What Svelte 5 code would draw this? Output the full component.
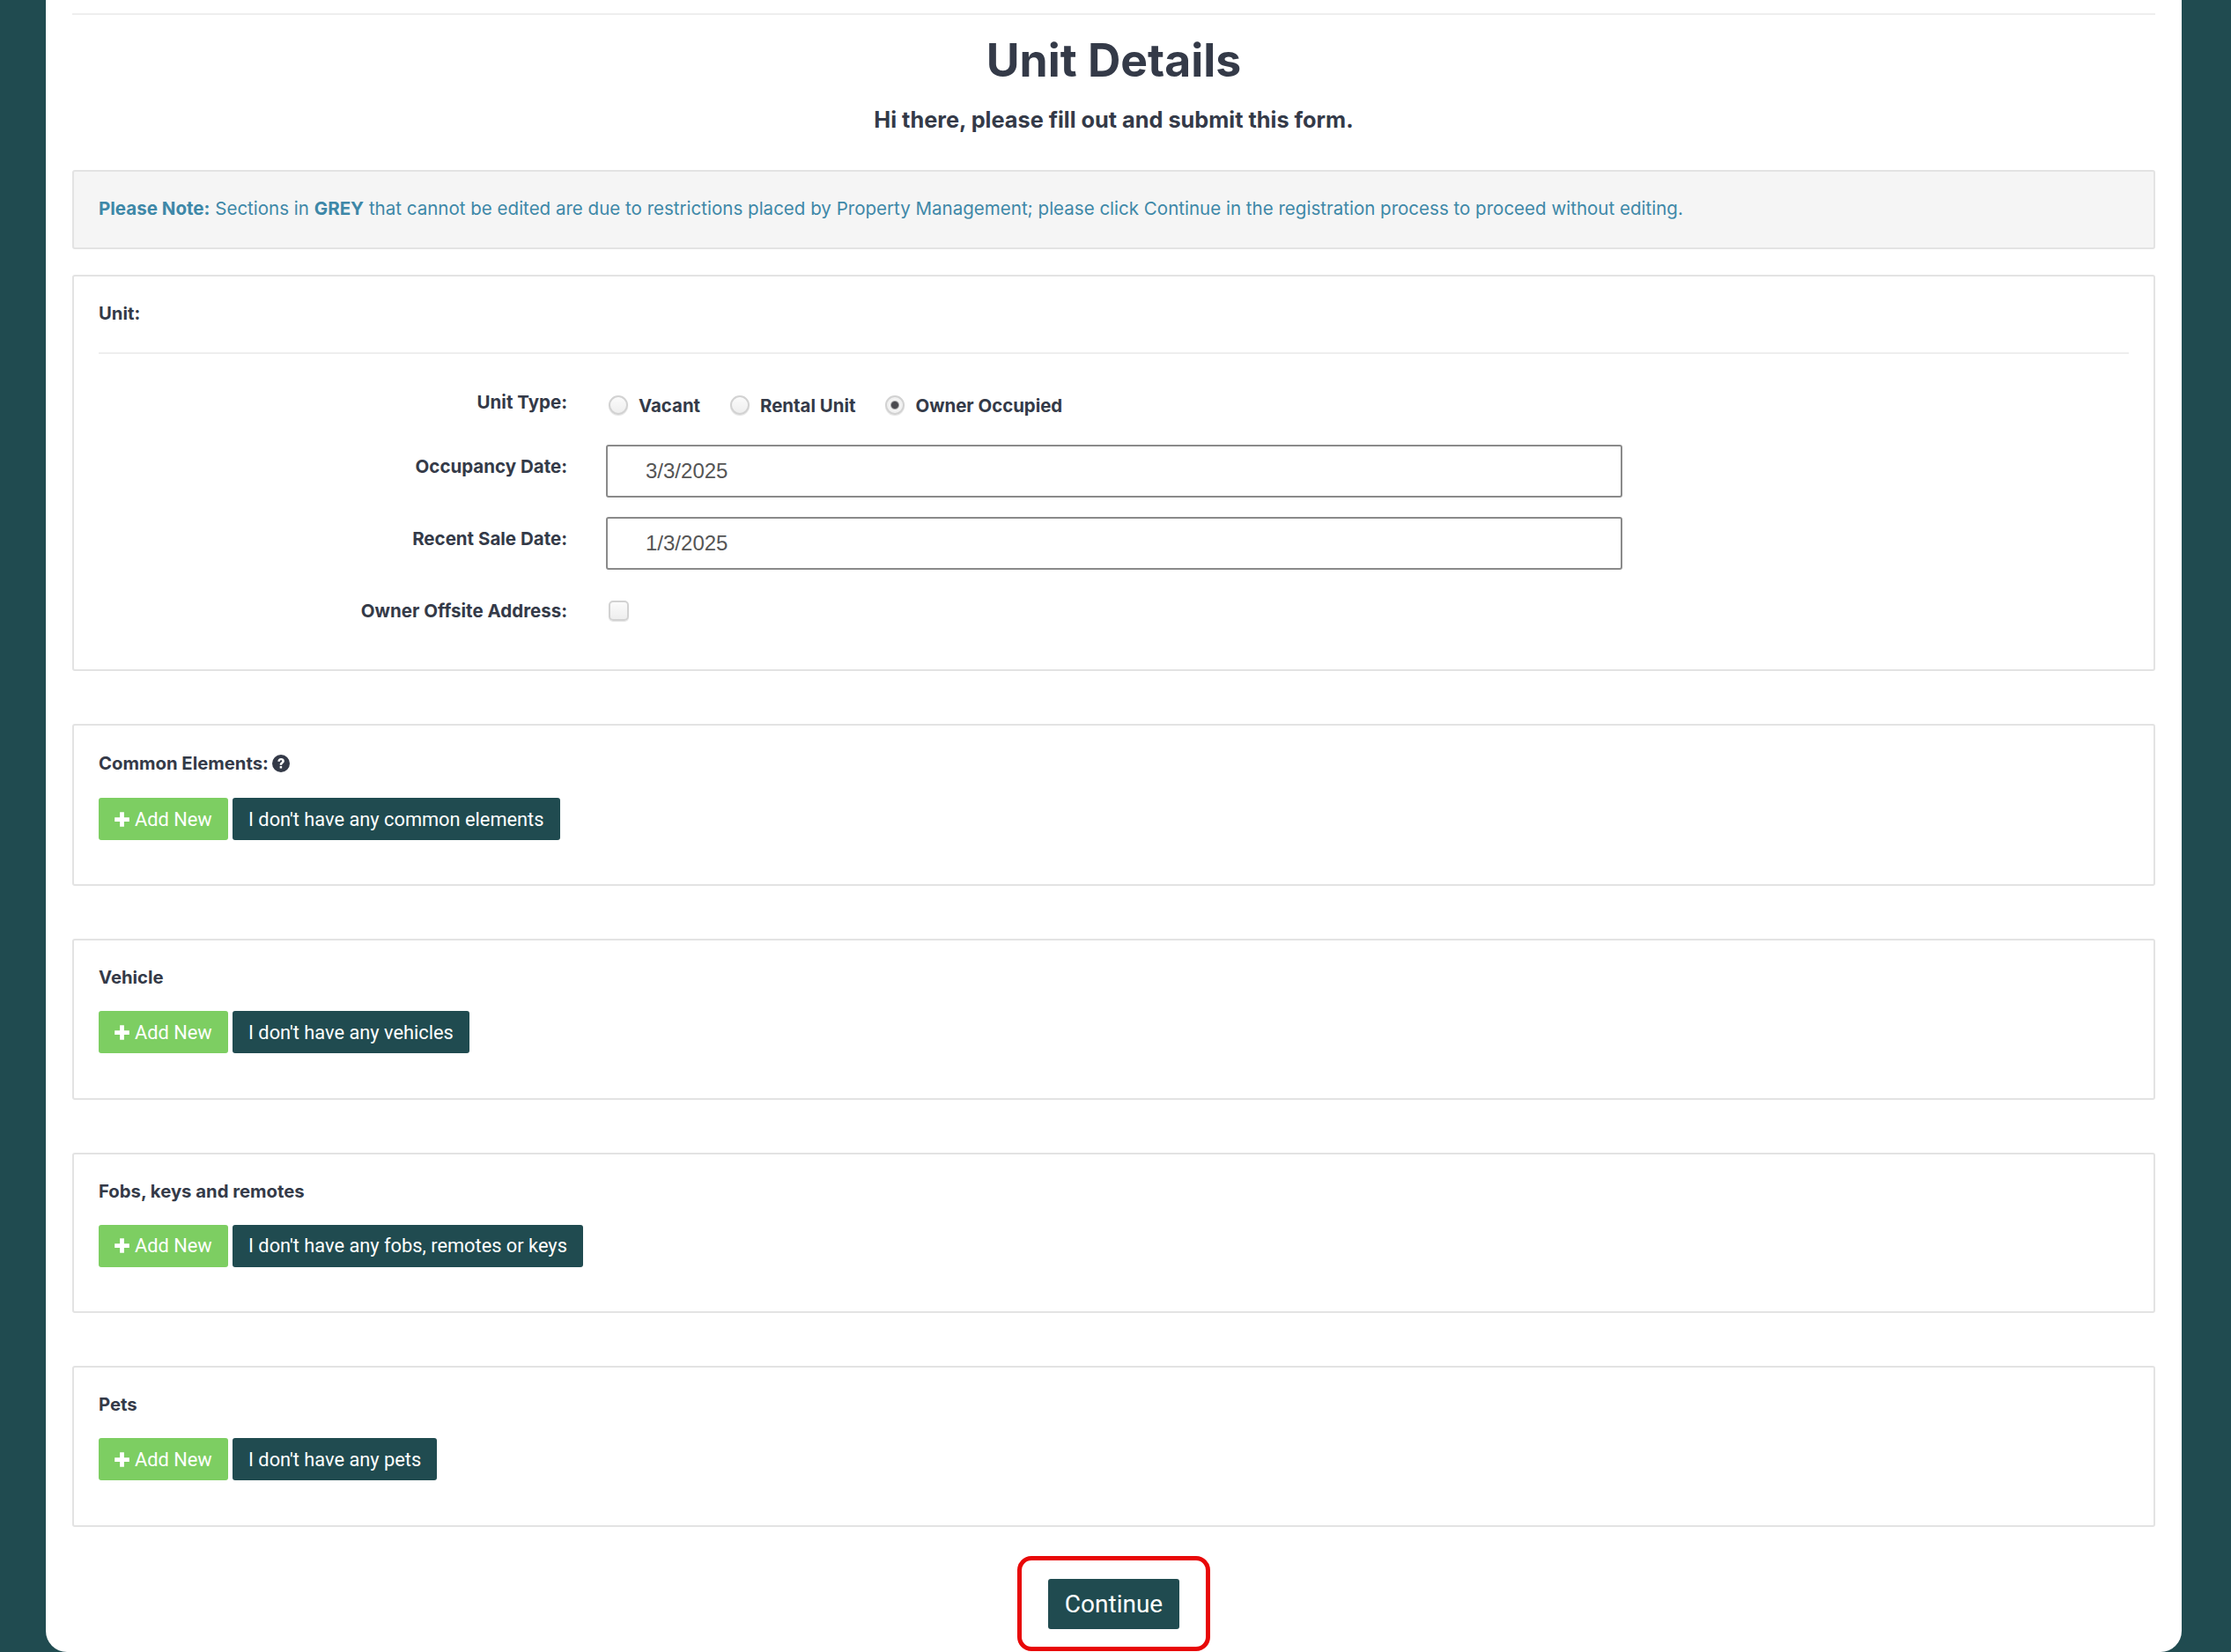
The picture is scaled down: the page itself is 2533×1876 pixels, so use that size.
<script>
  const sections = [
    { title: 'Common Elements:', help: true, none: "I don't have any common elements" },
    { title: 'Vehicle', none: "I don't have any vehicles" },
    { title: 'Fobs, keys and remotes', none: "I don't have any fobs, remotes or keys" },
    { title: 'Pets', none: "I don't have any pets" }
  ];
</script>

<main class="card">
  <hr class="top-rule" />
  <h1>Unit Details</h1>
  <p class="lead">Hi there, please fill out and submit this form.</p>

  <div class="note">
    <strong>Please Note:</strong> Sections in <strong>GREY</strong> that cannot be edited are due to restrictions placed by Property Management; please click Continue in the registration process to proceed without editing.
  </div>

  <section class="panel unit">
    <h2>Unit:</h2>
    <hr class="rule" />
    <div class="form-grid">
      <div class="lbl">Unit Type:</div>
      <div class="radios">
        <label><input type="radio" name="t" />Vacant</label>
        <label><input type="radio" name="t" />Rental Unit</label>
        <label><input type="radio" name="t" checked />Owner Occupied</label>
      </div>
      <div class="lbl">Occupancy Date:</div>
      <input class="field" type="text" value="3/3/2025" />
      <div class="lbl">Recent Sale Date:</div>
      <input class="field" type="text" value="1/3/2025" />
      <div class="lbl">Owner Offsite Address:</div>
      <div class="check"><input type="checkbox" /></div>
    </div>
  </section>

  {#each sections as s}
    <section class="panel list" class:has-help={s.help}>
      <h2>{s.title}{#if s.help}<svg class="help" viewBox="0 0 24 24" aria-hidden="true"><circle cx="12" cy="12" r="12" fill="#343a48"/><path d="M7.6 9.2c0-2.7 2-4.4 4.6-4.4 2.5 0 4.4 1.5 4.4 3.8 0 3.1-3.2 3.2-3.2 5.5h-3c0-3.6 3.1-3.8 3.1-5.3 0-.8-.6-1.2-1.3-1.2-.9 0-1.5.6-1.6 1.7z" fill="#fff"/><rect x="10.4" y="15.6" width="3" height="3" fill="#fff"/></svg>{/if}</h2>
      <div class="btns">
        <button class="add"><svg class="plus" viewBox="0 0 16 16" aria-hidden="true"><path d="M6 1h4v5h5v4h-5v5H6v-5H1V6h5z" fill="#fff"/></svg>Add New</button>
        <button class="dark">{s.none}</button>
      </div>
    </section>
  {/each}

  <div class="foot">
    <div class="callout"><button class="dark continue">Continue</button></div>
  </div>
</main>

<style>
  :global(body) {
    margin: 0;
    background: #204b50;
    height: 1876px;
    overflow: hidden;
  }
  .card {
    box-sizing: border-box;
    height: 1876px;
    margin: 0 56px 0 52px;
    padding: 15px 30px 0;
    background: #fff;
    border-radius: 0 0 24px 24px;
    color: #343a48;
    font-family: Inter, "Liberation Sans", sans-serif;
    overflow: hidden;
  }
  .top-rule {
    margin: 0;
    border: 0;
    border-top: 2px solid #eee;
  }
  h1 {
    margin: 0;
    padding-top: 19px;
    font-size: 51.7px;
    line-height: 64px;
    font-weight: 700;
    text-align: center;
  }
  .lead {
    margin: 21px 0 0;
    font-size: 25.3px;
    line-height: 30px;
    font-weight: 700;
    text-align: center;
  }
  .note {
    box-sizing: border-box;
    height: 90px;
    margin-top: 42px;
    padding: 0 28px;
    line-height: 84px;
    background: #f5f5f5;
    border: 2px solid #e3e3e3;
    border-radius: 3px;
    color: #3e88a8;
    font-size: 20.54px;
    white-space: nowrap;
  }
  .note strong { font-weight: 700; }
  .panel {
    box-sizing: border-box;
    border: 2px solid #e3e3e3;
    border-radius: 3px;
    padding: 0 28px;
  }
  .unit {
    height: 450px;
    margin-top: 29px;
  }
  h2 {
    margin: 0;
    font-size: 20.3px;
    font-weight: 700;
    line-height: 28px;
    display: flex;
    align-items: center;
    gap: 4px;
  }
  .unit h2 { padding-top: 28px; }
  .rule {
    margin: 30px 0 0;
    border: 0;
    border-top: 2px solid #eee;
  }
  .form-grid {
    display: grid;
    grid-template-columns: 532px 1154px;
    column-gap: 44px;
    margin-top: 30px;
    align-items: start;
  }
  .lbl {
    padding-top: 11px;
    text-align: right;
    font-size: 20.5px;
    font-weight: 700;
    line-height: 28px;
  }
  .radios {
    display: flex;
    gap: 31px;
    height: 73px;
    padding-top: 14px;
    box-sizing: border-box;
  }
  .radios label {
    display: flex;
    align-items: center;
    gap: 12px;
    height: 28px;
    font-size: 20.4px;
    font-weight: 700;
  }
  input[type='radio'],
  input[type='checkbox'] {
    appearance: none;
    margin: 0 0 0 3px;
    width: 22px;
    height: 22px;
    border: 2px solid #d2d2d2;
    background: linear-gradient(#fbfbfb, #eeeeee);
    box-shadow: 0 1px 1px rgba(0, 0, 0, 0.12);
    box-sizing: border-box;
    display: block;
  }
  input[type='radio'] { border-radius: 50%; }
  input[type='radio']:checked {
    background: radial-gradient(circle, #4a4a4f 0 3.5px, #f4f4f4 5.5px, #ececec 100%);
  }
  input[type='checkbox'] { border-radius: 5px; width: 23px; height: 23px; }
  .field {
    box-sizing: border-box;
    width: 1154px;
    height: 60px;
    margin-bottom: 22px;
    padding: 0 43px;
    border: 2px solid #8a8a8a;
    border-radius: 3px;
    font-family: "Liberation Sans", sans-serif;
    font-size: 24px;
    color: #555;
  }
  .field:focus { outline: none; }
  .check { padding-top: 13px; }
  .list {
    height: 182.5px;
    margin-top: 60px;
    padding-top: 28px;
  }
  .list.has-help { height: 184px; padding-top: 29px; }
  .btns {
    display: flex;
    gap: 5px;
    margin-top: 24px;
  }
  .has-help .btns { margin-top: 25px; }
  button {
    height: 48px;
    border: 0;
    border-radius: 3px;
    color: #fff;
    font-family: Roboto, sans-serif;
    font-size: 21.8px;
    padding: 0 18px;
    display: flex;
    align-items: center;
  }
  .add { background: #7dce62; width: 147px; gap: 5px; padding: 0 0 0 17px; }
  .plus { width: 19px; height: 19px; }
  .dark { background: #204b50; }
  .help { width: 20px; height: 20px; }
  .foot {
    display: flex;
    justify-content: center;
    margin-top: 33.5px;
  }
  .callout {
    border: 5px solid #e80808;
    border-radius: 16px;
    padding: 21px 30px 20px;
  }
  .continue {
    width: 149px;
    height: 57px;
    justify-content: center;
    font-size: 28px;
    padding: 0;
  }
</style>
